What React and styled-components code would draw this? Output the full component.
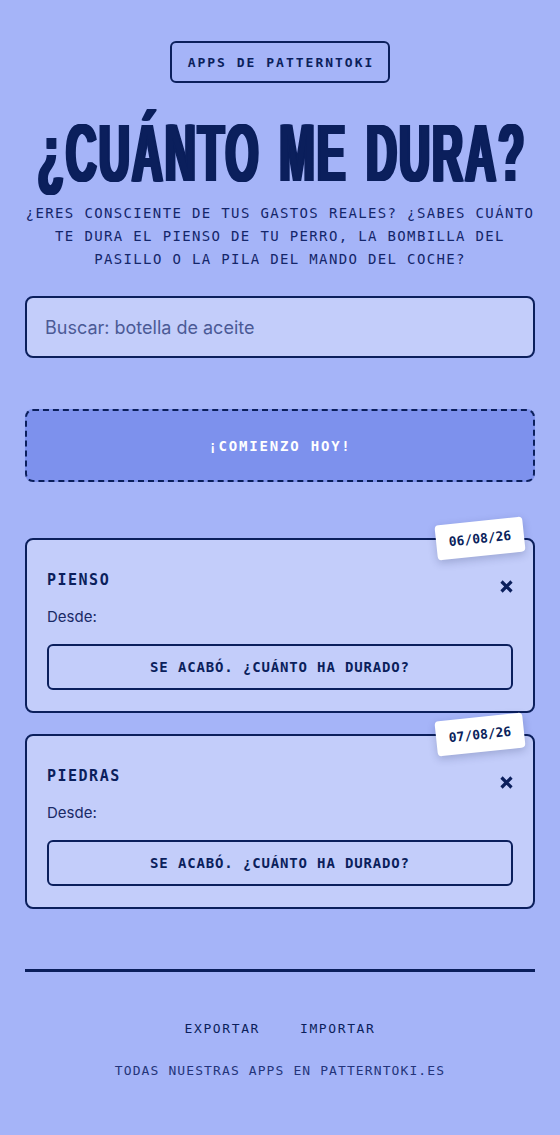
import React from "react";
import styled, { createGlobalStyle } from "styled-components";

const NAVY = "#0b1f5c";
const MONO = `"DejaVu Sans Mono", "Liberation Mono", monospace`;
const SANS = `Inter, "Noto Sans", sans-serif`;

const GlobalStyle = createGlobalStyle`
  html, body {
    margin: 0;
    padding: 0;
    background: #a5b4f8;
    overflow-x: hidden;
  }
  * {
    box-sizing: border-box;
  }
`;

const items = [
  { id: 1, name: "PIENSO", date: "06/08/26" },
  { id: 2, name: "PIEDRAS", date: "07/08/26" },
];

const App = () => {
  return (
    <>
      <GlobalStyle />
      <Page>
        <Header>
          <Brand>APPS DE PATTERNTOKI</Brand>
          <TitleRow>
            <Title>¿CUÁNTO ME DURA?</Title>
          </TitleRow>
          <Lead>
            ¿ERES CONSCIENTE DE TUS GASTOS REALES? ¿SABES CUÁNTO TE DURA EL
            PIENSO DE TU PERRO, LA BOMBILLA DEL PASILLO O LA PILA DEL MANDO DEL
            COCHE?
          </Lead>
        </Header>

        <Search placeholder="Buscar: botella de aceite" />

        <StartBtn>¡COMIENZO HOY!</StartBtn>

        <List>
          {items.map((item) => (
            <Card key={item.id}>
              <DateTag>{item.date}</DateTag>
              <CardHead>
                <CardTitle>{item.name}</CardTitle>
                <CloseBtn aria-label="Eliminar">
                  <svg width="13" height="13" viewBox="0 0 13 13">
                    <path
                      d="M1.5 1.5 L11.5 11.5 M11.5 1.5 L1.5 11.5"
                      stroke={NAVY}
                      strokeWidth="3.2"
                      fill="none"
                    />
                  </svg>
                </CloseBtn>
              </CardHead>
              <Since>Desde:</Since>
              <EndBtn>SE ACABÓ. ¿CUÁNTO HA DURADO?</EndBtn>
            </Card>
          ))}
        </List>

        <Divider />

        <FooterLinks>
          <FooterLink>EXPORTAR</FooterLink>
          <FooterLink>IMPORTAR</FooterLink>
        </FooterLinks>
        <Credits>TODAS NUESTRAS APPS EN PATTERNTOKI.ES</Credits>
      </Page>
    </>
  );
};

export default App;

const Page = styled.div`
  display: flex;
  flex-direction: column;
  padding: 41px 25px 60px;
  min-height: 100vh;
  color: ${NAVY};
`;

const Header = styled.header`
  display: flex;
  flex-direction: column;
  align-items: center;
`;

const Brand = styled.div`
  display: inline-flex;
  align-items: center;
  height: 42px;
  padding: 0 14px 0 16px;
  border: 2px solid ${NAVY};
  border-radius: 6px;
  font-family: ${MONO};
  font-weight: 700;
  font-size: 13px;
  letter-spacing: 2px;
`;

const TitleRow = styled.div`
  display: flex;
  justify-content: center;
  width: 100%;
  margin-top: 30px;
  height: 81px;
`;

const Title = styled.h1`
  margin: 0;
  flex-shrink: 0;
  white-space: nowrap;
  font-family: "Liberation Sans", Arial, sans-serif;
  font-weight: 700;
  font-size: 81px;
  line-height: 81px;
  letter-spacing: 5px;
  word-spacing: 8px;
  color: ${NAVY};
  transform: translateX(2px) scaleX(0.52);
  transform-origin: center;
  text-shadow: -4px 0 0 ${NAVY}, -2.5px 0 0 ${NAVY}, -1px 0 0 ${NAVY},
    1px 0 0 ${NAVY}, 2.5px 0 0 ${NAVY}, 4px 0 0 ${NAVY};
`;

const Lead = styled.p`
  margin: 8px 0 0;
  text-align: center;
  font-family: ${MONO};
  font-size: 14px;
  line-height: 23px;
  letter-spacing: 1.35px;
  color: #14266a;
`;

const Search = styled.input`
  margin-top: 25px;
  height: 62px;
  width: 100%;
  padding: 0 18px;
  border: 2px solid ${NAVY};
  border-radius: 8px;
  background: #c3cdfa;
  font-family: ${SANS};
  font-size: 18px;
  color: ${NAVY};
  outline: none;

  &::placeholder {
    color: #4b5a96;
  }
`;

const StartBtn = styled.button`
  margin-top: 51px;
  height: 73px;
  width: 100%;
  border: 2px dashed ${NAVY};
  border-radius: 8px;
  background: #7d91ed;
  color: #ffffff;
  font-family: ${MONO};
  font-weight: 700;
  font-size: 14px;
  letter-spacing: 1.8px;
  cursor: pointer;
`;

const List = styled.div`
  display: flex;
  flex-direction: column;
  gap: 21px;
  margin-top: 56px;
`;

const Card = styled.div`
  position: relative;
  display: flex;
  flex-direction: column;
  padding: 30px 20px 21px;
  border: 2px solid ${NAVY};
  border-radius: 8px;
  background: #c3cdfa;
`;

const DateTag = styled.div`
  position: absolute;
  top: -19px;
  right: 9px;
  display: flex;
  align-items: center;
  justify-content: center;
  width: 88px;
  height: 35px;
  background: #ffffff;
  border-radius: 4px;
  box-shadow: 0 3px 8px rgba(20, 30, 80, 0.22);
  transform: rotate(-6deg);
  font-family: ${MONO};
  font-weight: 700;
  font-size: 13px;
  color: ${NAVY};
`;

const CardHead = styled.div`
  display: flex;
  justify-content: space-between;
  align-items: flex-start;
`;

const CardTitle = styled.h2`
  margin: 0;
  font-family: ${MONO};
  font-weight: 700;
  font-size: 15px;
  line-height: 20px;
  letter-spacing: 1.5px;
`;

const CloseBtn = styled.button`
  display: flex;
  margin-top: 10px;
  padding: 0;
  border: none;
  background: none;
  cursor: pointer;
`;

const Since = styled.div`
  margin-top: 14px;
  font-family: ${SANS};
  font-size: 15px;
  line-height: 20px;
  color: #1a2a66;
`;

const EndBtn = styled.button`
  margin-top: 17px;
  height: 46px;
  width: 100%;
  border: 2px solid ${NAVY};
  border-radius: 6px;
  background: transparent;
  color: ${NAVY};
  font-family: ${MONO};
  font-weight: 700;
  font-size: 14px;
  letter-spacing: 0.85px;
  cursor: pointer;
`;

const Divider = styled.hr`
  margin: 60px 0 0;
  height: 3px;
  border: none;
  background: ${NAVY};
`;

const FooterLinks = styled.nav`
  display: flex;
  justify-content: center;
  gap: 40px;
  margin-top: 49px;
`;

const FooterLink = styled.a`
  font-family: ${MONO};
  font-size: 13px;
  line-height: 16px;
  letter-spacing: 1.6px;
  color: ${NAVY};
  cursor: pointer;
`;

const Credits = styled.div`
  margin-top: 26px;
  text-align: center;
  font-family: ${MONO};
  font-size: 13px;
  line-height: 16px;
  letter-spacing: 1.1px;
  color: #24347a;
`;
